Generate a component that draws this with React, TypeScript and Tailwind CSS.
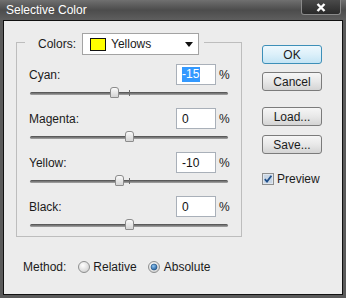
import React from "react";

const font = { fontFamily: '"Liberation Sans", Arial, sans-serif' };

function SliderGroup({ label, value, selected }: { label: string; value: number; selected?: boolean }) {
  const left = 99 + value * 0.99 - 4.5;
  return (
    <div className="flex flex-col">
      <div className="flex items-center h-[21px]">
        <span className="flex-1 text-[12px] text-[#1b1b1b]">{label}</span>
        <div className="w-[40px] h-[21px] border border-[#a9b0b9] bg-white flex items-center pl-[5px] text-[12px] text-[#111]">
          {selected ? (
            <span className="bg-[#3399ff] text-white leading-[15px] pr-[1px]">{value}</span>
          ) : (
            <span>{value}</span>
          )}
        </div>
        <span className="ml-[3px] w-[11px] text-[12px] text-[#1b1b1b]">%</span>
      </div>
      <div className="relative h-[19px] mx-[1px] w-[198px]">
        <div className="mt-[7px] h-[3px] rounded-full bg-gradient-to-b from-[#4a4a4a] via-[#7a7a7a] to-[#a8a8a8]" />
        <div className="absolute left-[99px] top-[5px] w-[1px] h-[6px] bg-[#6a6a6a]" />
        <div
          className="absolute top-[2px] w-[9px] h-[11px] border border-[#8c8c8c] rounded-t-[3px] rounded-b-[1px] bg-gradient-to-b from-[#fafafa] to-[#d4d4d4]"
          style={{ left }}
        />
      </div>
    </div>
  );
}

function Btn({ children, primary, className = "" }: { children: React.ReactNode; primary?: boolean; className?: string }) {
  return (
    <div
      className={
        "w-[60px] h-[19px] rounded-[3px] border flex items-center justify-center text-[12px] text-[#1b1b1b] " +
        (primary
          ? "border-[#3d8fb8] bg-gradient-to-b from-[#eef8fd] via-[#dcf0fa] to-[#c4e4f4] "
          : "border-[#7b7b7b] bg-gradient-to-b from-[#f6f6f6] via-[#e8e8e8] to-[#d4d4d4] ") +
        className
      }
    >
      {children}
    </div>
  );
}

function Radio({ checked }: { checked?: boolean }) {
  return (
    <svg width="12" height="12" viewBox="0 0 12 12">
      <defs>
        <radialGradient id={checked ? "rg1" : "rg0"} cx="40%" cy="35%" r="70%">
          <stop offset="0%" stopColor="#ffffff" />
          <stop offset="100%" stopColor="#d0d0d0" />
        </radialGradient>
        <radialGradient id="dot" cx="40%" cy="35%" r="70%">
          <stop offset="0%" stopColor="#8fc4ef" />
          <stop offset="100%" stopColor="#1d5a9a" />
        </radialGradient>
      </defs>
      <circle cx="6" cy="6" r="5.5" fill={`url(#${checked ? "rg1" : "rg0"})`} stroke="#8e8f8f" />
      {checked && <circle cx="6" cy="6" r="3" fill="url(#dot)" stroke="#1a4d80" strokeWidth="0.6" />}
    </svg>
  );
}

export default function App() {
  return (
    <div className="w-[346px] h-[298px] bg-[#5a5a5a] flex flex-col" style={font}>
      <div className="h-[20px] flex justify-between items-start bg-gradient-to-b from-[#707070] via-[#4c4c4c] to-[#5e5e5e]">
        <span className="ml-[6px] mt-[3px] text-[12px] leading-[15px] text-white">Selective Color</span>
        <div className="mr-[5px] w-[40px] h-[15px] bg-gradient-to-b from-[#4a4a4a] to-[#2a2a2a] border border-t-0 border-[#8a8a8a] rounded-b-[3px] flex items-center justify-center">
          <svg width="10" height="9" viewBox="0 0 10 9">
            <path d="M1.5 1 L8.5 8 M8.5 1 L1.5 8" stroke="#ffffff" strokeWidth="2.4" />
          </svg>
        </div>
      </div>
      <div className="flex-1 mx-[3px] mb-[3px] border border-[#111] bg-[#ececec] flex">
        <div className="ml-[12px] mt-[8px] flex flex-col">
          <fieldset className="w-[226px] border border-[#bdbdbd] p-0 m-0">
            <legend className="ml-[8px] pl-[13px] pr-[5px] pt-[4px]">
              <div className="flex items-center">
                <span className="w-[44px] text-[12px] text-[#1b1b1b]">Colors:</span>
                <div className="w-[117px] h-[22px] border border-[#a3a3a3] bg-white flex items-center pl-[7px]">
                  <div className="w-[16px] h-[13px] bg-[#ffff00] border border-[#111]" />
                  <span className="ml-[5px] text-[12px] text-[#1b1b1b]">Yellows</span>
                  <svg className="ml-auto mr-[5px]" width="8" height="5" viewBox="0 0 8 5">
                    <path d="M0 0 H8 L4 5 Z" fill="#111" />
                  </svg>
                </div>
              </div>
            </legend>
            <div className="pl-[12px] pr-[11px] pt-[9px] flex flex-col gap-[4px]">
              <SliderGroup label="Cyan:" value={-15} selected />
              <SliderGroup label="Magenta:" value={0} />
              <SliderGroup label="Yellow:" value={-10} />
              <SliderGroup label="Black:" value={0} />
            </div>
          </fieldset>
          <div className="mt-[22px] ml-[7px] h-[16px] flex items-center text-[12px] text-[#1b1b1b]">
            <span>Method:</span>
            <span className="ml-[12px] flex items-center">
              <Radio />
            </span>
            <span className="ml-[3px]">Relative</span>
            <span className="ml-[11px] flex items-center">
              <Radio checked />
            </span>
            <span className="ml-[4px]">Absolute</span>
          </div>
        </div>
        <div className="ml-[20px] mt-[24px] flex flex-col">
          <Btn primary>OK</Btn>
          <Btn className="mt-[8px]">Cancel</Btn>
          <Btn className="mt-[16px]">Load...</Btn>
          <Btn className="mt-[9px]">Save...</Btn>
          <div className="mt-[16px] flex items-center">
            <svg width="12" height="12" viewBox="0 0 12 12">
              <rect x="0.5" y="0.5" width="11" height="11" fill="#dfe6ee" stroke="#8e8f8f" />
              <rect x="2" y="2" width="8" height="8" fill="#c9d6e4" />
              <path d="M2.8 6.2 L5 8.6 L9.4 2.8" fill="none" stroke="#1f4f8a" strokeWidth="1.8" />
            </svg>
            <span className="ml-[3px] text-[12px] text-[#1b1b1b]">Preview</span>
          </div>
        </div>
      </div>
    </div>
  );
}
